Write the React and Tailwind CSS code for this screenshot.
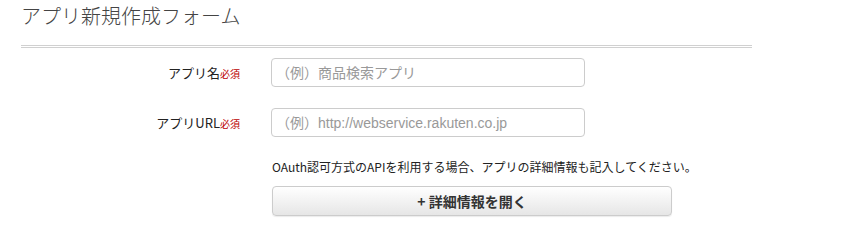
export default function App() {
  const font = { fontFamily: '"Noto Sans CJK JP", "Liberation Sans", sans-serif' };
  const inputFont = { fontFamily: '"Liberation Sans", "Noto Sans CJK JP", sans-serif' };
  return (
    <div className="w-[855px] h-[233px] bg-white text-[#333] overflow-hidden" style={font}>
      <div className="pl-[21px] w-[752px]">
        <h1 className="text-[20px] leading-[30px] font-light text-[#444] pt-[1px]">アプリ新規作成フォーム</h1>
        <div className="mt-[14px] border-t border-b border-[#d0d0d0] h-[3px]"></div>
      </div>
      <div className="mt-[10px] flex flex-col gap-[21px]">
        <div className="flex items-center">
          <div className="w-[241px] text-right text-[13px] text-[#222] pr-[1px]">
            アプリ名<span className="text-[10px] text-[#b00]">必須</span>
          </div>
          <input
            className="ml-[30px] w-[314px] h-[29px] border border-[#ccc] rounded-[4px] px-[4px] text-[14px] placeholder-[#999] outline-none"
            style={inputFont}
            placeholder="（例）商品検索アプリ"
          />
        </div>
        <div className="flex items-center">
          <div className="w-[241px] text-right text-[13px] text-[#222] pr-[1px]">
            アプリURL<span className="text-[10px] text-[#b00]">必須</span>
          </div>
          <input
            className="ml-[30px] w-[314px] h-[29px] border border-[#ccc] rounded-[4px] px-[4px] text-[14px] placeholder-[#999] outline-none"
            style={inputFont}
            placeholder="（例）http://webservice.rakuten.co.jp"
          />
        </div>
      </div>
      <div className="ml-[272px] mt-[22px] text-[12px] leading-[16px] text-[#222]">
        OAuth認可方式のAPIを利用する場合、アプリの詳細情報も記入してください。
      </div>
      <button className="ml-[272px] mt-[11px] w-[400px] h-[30px] border border-[#ccc] rounded-[4px] bg-gradient-to-b from-white to-[#e6e6e6] text-[14px] font-bold text-[#333] shadow-[0_1px_1px_rgba(0,0,0,0.08)]">
        + 詳細情報を開く
      </button>
    </div>
  );
}
